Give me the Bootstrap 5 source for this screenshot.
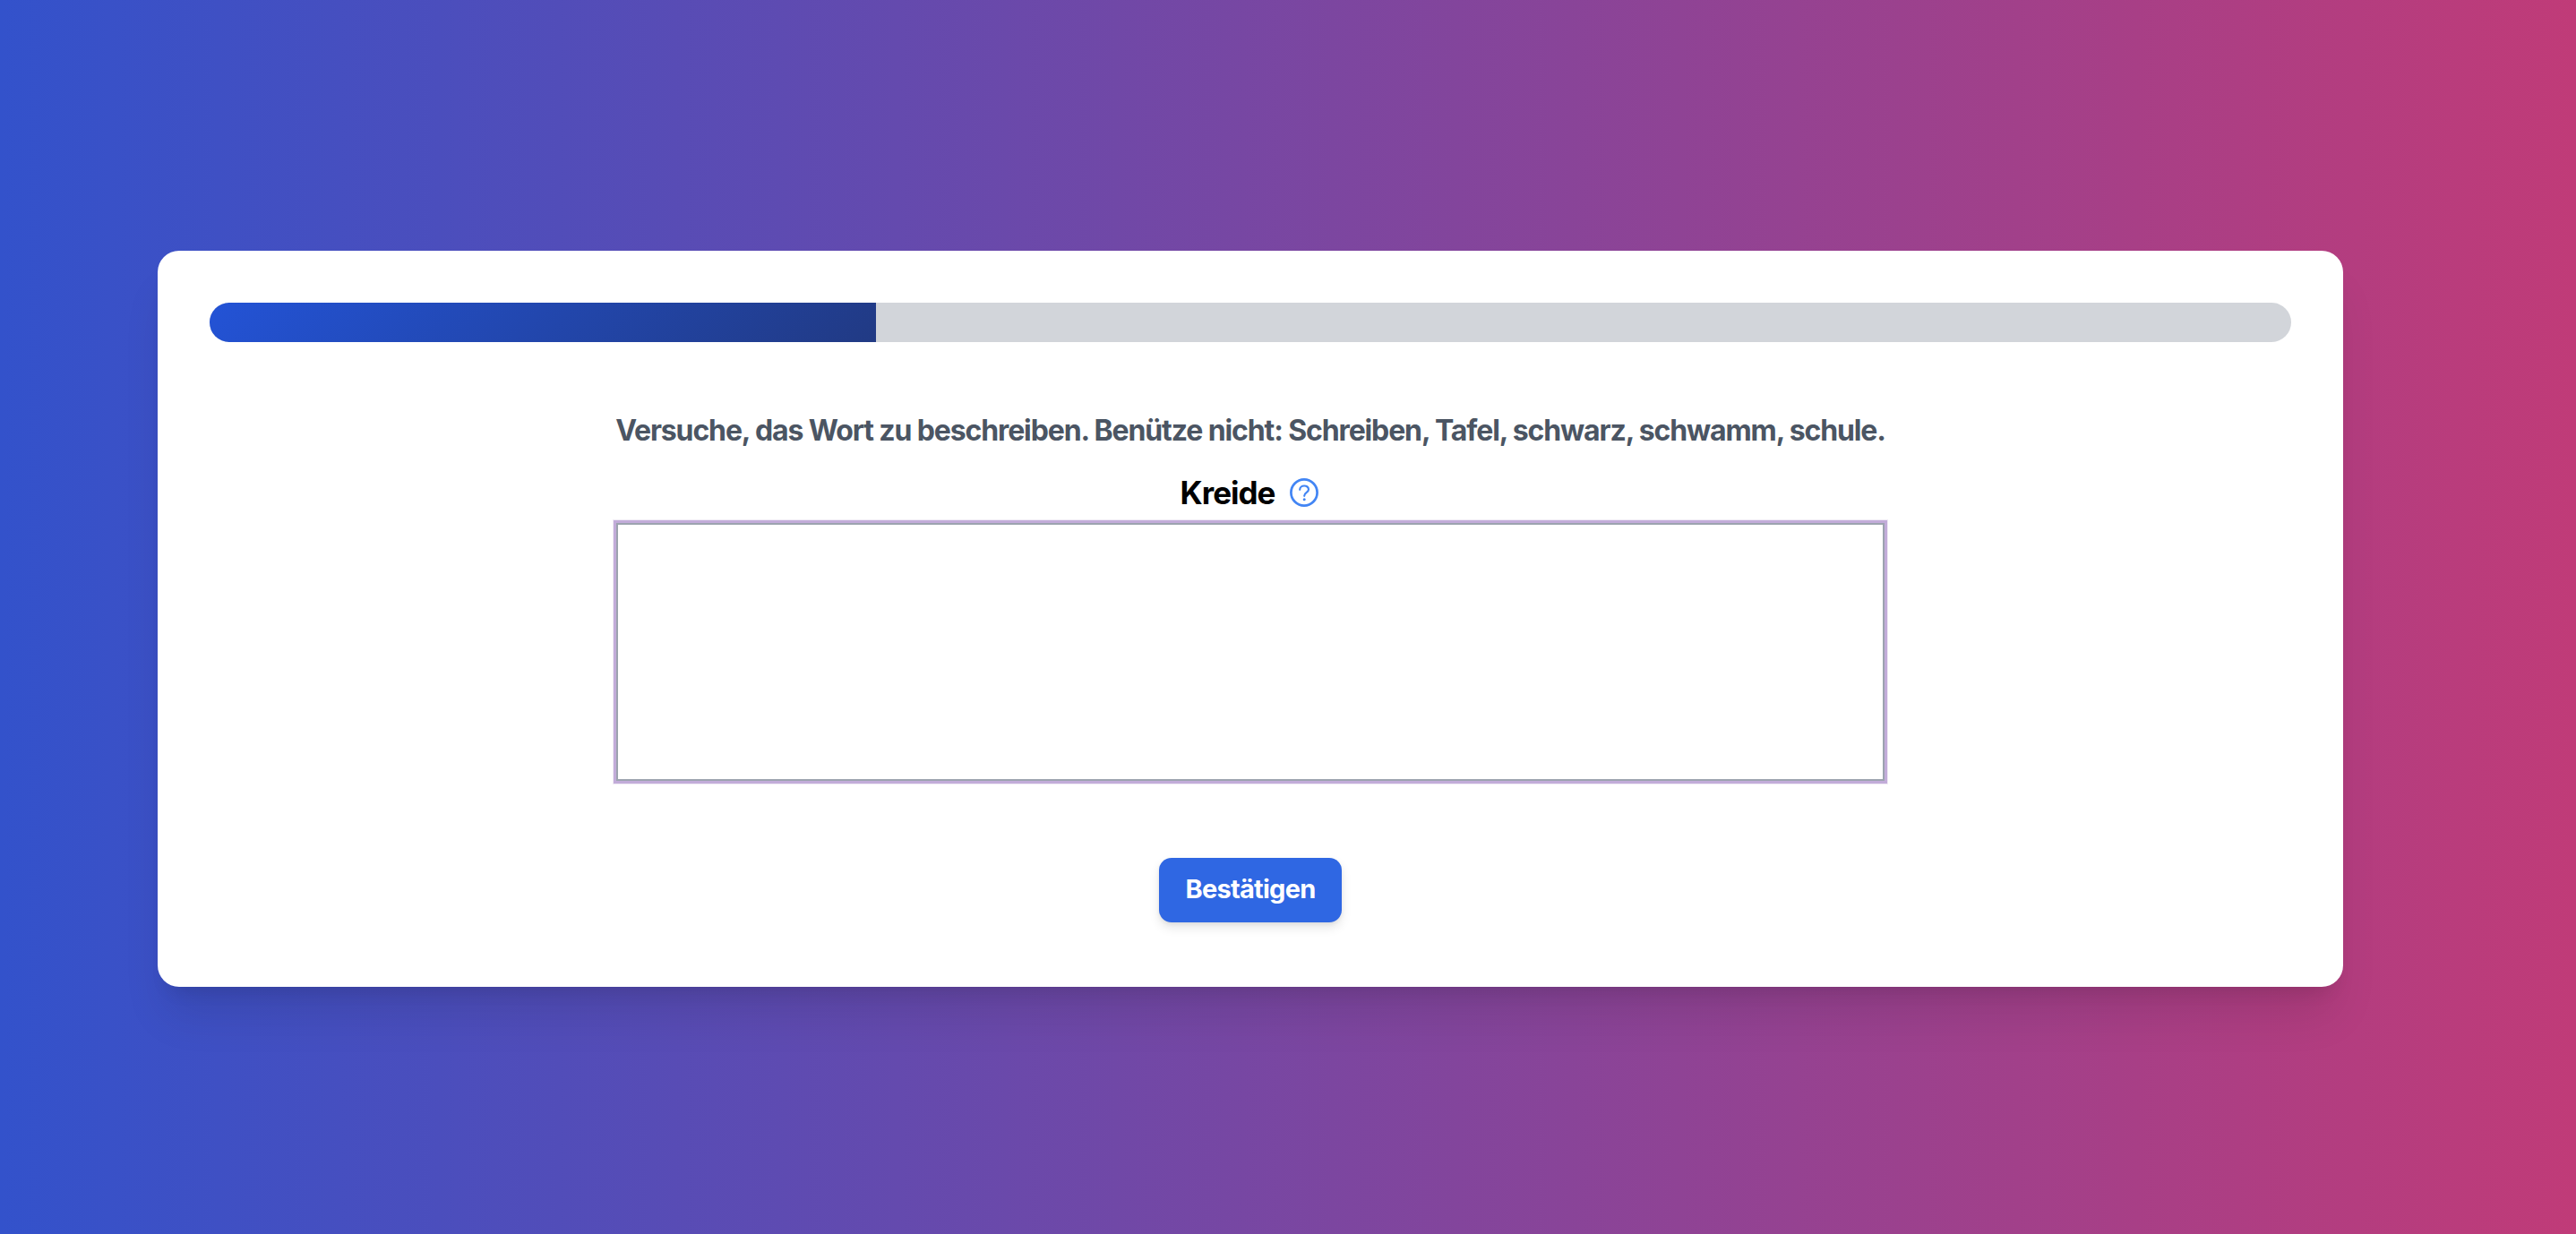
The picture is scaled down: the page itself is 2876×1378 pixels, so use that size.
<!DOCTYPE html>
<html lang="de">
<head>
  <meta charset="UTF-8" />
  <meta name="viewport" content="width=device-width, initial-scale=1.0"/>
  <title>Wort beschreiben</title>

  <!-- Bootstrap CSS -->
  <link href="https://cdn.jsdelivr.net/npm/bootstrap@5.3.3/dist/css/bootstrap.min.css" rel="stylesheet"/>

  <style>
    body {
      font-family: Inter, "Liberation Sans", sans-serif;
      background: linear-gradient(to right, #3352cb, #c03b78);
      padding: 280px 260px 0 176px;
      overflow: hidden;
    }
    .quiz-card {
      height: 822px;
      padding: 58px;
      border: 0;
      border-radius: 24px;
      box-shadow: 0 40px 50px -10px rgba(0, 0, 0, 0.1), 0 16px 20px -12px rgba(0, 0, 0, 0.1);
    }
    .quiz-progress {
      height: 44px;
      border-radius: 22px;
      background-color: #d2d5da;
    }
    .quiz-progress .progress-bar {
      background: linear-gradient(135deg, #2353d6, #213a84);
    }
    .quiz-form {
      width: 1416px;
      margin-top: 74px;
    }
    .task-text {
      font-size: 32px;
      font-weight: 650;
      line-height: 50px;
      letter-spacing: -1.12px;
      color: #4b5563;
    }
    .word {
      font-size: 35px;
      font-weight: 650;
      line-height: 48px;
      letter-spacing: -1px;
      color: #000;
    }
    .word-row {
      margin: -4px 0 10px;
      padding-left: 2px;
      gap: 13px;
    }
    .answer,
    .answer:focus {
      height: 288px;
      resize: none;
      border: 2px solid #9ca3af;
      border-radius: 0;
      box-shadow: 0 0 0 3px #c2acd9, 0 0 0 4px #f0eaf5;
    }
    .btn-confirm {
      --bs-btn-color: #fff;
      --bs-btn-bg: #2f67e3;
      --bs-btn-hover-color: #fff;
      --bs-btn-hover-bg: #1d4ed8;
      width: 204px;
      height: 72px;
      margin-top: 86px;
      padding: 0 0 2px;
      border: 0;
      border-radius: 14px;
      font-size: 29px;
      font-weight: 650;
      letter-spacing: -0.75px;
      box-shadow: 0 6px 12px rgba(0, 0, 0, 0.1), 0 2px 4px rgba(0, 0, 0, 0.06);
    }
  </style>
</head>
<body class="vh-100">
  <div class="card quiz-card align-items-center">
    <div class="progress quiz-progress w-100 flex-shrink-0">
      <div class="progress-bar" role="progressbar" style="width: 32%" aria-valuenow="32" aria-valuemin="0" aria-valuemax="100"></div>
    </div>

    <form id="answerForm" class="quiz-form d-flex flex-column align-items-center">
      <p class="task-text text-nowrap mb-4">Versuche, das Wort zu beschreiben. Benütze nicht: Schreiben, Tafel, schwarz, schwamm, schule.</p>
      <div class="word-row d-flex align-items-center">
        <label for="answer" class="word">Kreide</label>
        <svg width="40" height="40" viewBox="0 0 40 40" fill="none" stroke="#4285f4" stroke-width="2.7" stroke-linecap="round">
          <circle cx="20" cy="20" r="14.6"/>
          <path stroke-width="2.2" d="M15.2 16.8C15.4 11 25 11.2 25 16.5C25 20 20.2 19.8 20.2 23.8"/>
          <circle cx="20.2" cy="27.8" r="1.5" fill="#4285f4" stroke="none"/>
        </svg>
      </div>
      <textarea id="answer" class="form-control answer"></textarea>
      <button type="submit" class="btn btn-confirm">Bestätigen</button>
    </form>
  </div>

  <script src="https://cdn.jsdelivr.net/npm/bootstrap@5.3.3/dist/js/bootstrap.bundle.min.js"></script>
</body>
</html>
